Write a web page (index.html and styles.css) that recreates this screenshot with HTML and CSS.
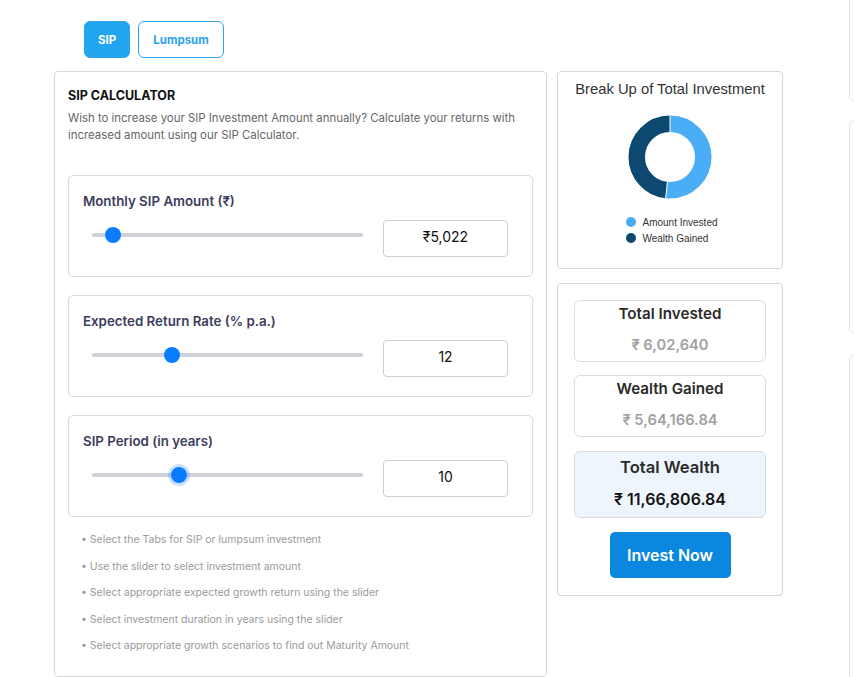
FILE: index.html
```html
<!DOCTYPE html>
<html>
<head>
	<title>SIP Calculator</title>
	<link rel="stylesheet" href="styles.css">
</head>
<body>
	<div class="page">
		<div class="calc">
			<div class="tabs">
				<button class="tab active">SIP</button>
				<button class="tab">Lumpsum</button>
			</div>

			<div class="calc-body">
				<div class="panel inputs">
					<h3>SIP CALCULATOR</h3>
					<p class="intro">Wish to increase your SIP Investment Amount annually? Calculate your returns with increased amount using our SIP Calculator.</p>

					<div class="field">
						<label>Monthly SIP Amount (₹)</label>
						<div class="field-row">
							<input type="range" min="500" max="90000" value="5022">
							<input type="text" class="field-value" value="₹5,022">
						</div>
					</div>

					<div class="field">
						<label>Expected Return Rate (% p.a.)</label>
						<div class="field-row">
							<input type="range" min="1" max="40" value="12">
							<input type="text" class="field-value" value="12">
						</div>
					</div>

					<div class="field">
						<label>SIP Period (in years)</label>
						<div class="field-row">
							<input type="range" class="focused" min="1" max="30" value="10">
							<input type="text" class="field-value" value="10">
						</div>
					</div>

					<ul class="tips">
						<li>Select the Tabs for SIP or lumpsum investment</li>
						<li>Use the slider to select investment amount</li>
						<li>Select appropriate expected growth return using the slider</li>
						<li>Select investment duration in years using the slider</li>
						<li>Select appropriate growth scenarios to find out Maturity Amount</li>
					</ul>
				</div>

				<div class="side">
					<div class="panel chart">
						<h4>Break Up of Total Investment</h4>
						<svg class="donut" width="84" height="84" viewBox="0 0 84 84">
							<g transform="rotate(-90 42 42)">
								<circle cx="42" cy="42" r="33.25" fill="none" stroke="#4aaef6" stroke-width="16.5" stroke-dasharray="107.9 300"></circle>
								<circle cx="42" cy="42" r="33.25" fill="none" stroke="#0c486f" stroke-width="16.5" stroke-dasharray="101 300" stroke-dashoffset="-107.9"></circle>
							</g>
							<line x1="42" y1="0.5" x2="42" y2="17" stroke="#fff" stroke-width="1"></line>
							<line x1="39.4" y1="66.9" x2="37.7" y2="83.3" stroke="#fff" stroke-width="1"></line>
						</svg>
						<div class="legend">
							<div><span class="dot invested"></span>Amount Invested</div>
							<div><span class="dot gained"></span>Wealth Gained</div>
						</div>
					</div>

					<div class="panel results">
						<div class="stat">
							<div class="stat-title">Total Invested</div>
							<div class="stat-value">₹ 6,02,640</div>
						</div>
						<div class="stat">
							<div class="stat-title">Wealth Gained</div>
							<div class="stat-value">₹ 5,64,166.84</div>
						</div>
						<div class="stat total">
							<div class="stat-title">Total Wealth</div>
							<div class="stat-value">₹ 11,66,806.84</div>
						</div>
						<button class="invest">Invest Now</button>
					</div>
				</div>
			</div>
		</div>

		<div class="aside">
			<div class="aside-card first"></div>
			<div class="aside-card second"></div>
			<div class="aside-card third"></div>
		</div>
	</div>
</body>
</html>
```

FILE: styles.css
```css
html, body {
	margin: 0;
	overflow: hidden;
	background: #fff;
}

body, input, button {
	font-family: Inter, "Noto Sans", sans-serif;
}

.page {
	display: flex;
	padding-left: 54px;
	gap: 66px;
}

.calc {
	width: 729px;
	flex-shrink: 0;
}

/* tabs */

.tabs {
	display: flex;
	gap: 8px;
	margin: 21px 0 13px 30px;
}

.tab {
	height: 37px;
	padding: 0;
	border: 1px solid #2ea4ef;
	border-radius: 6px;
	background: #fff;
	color: #2ea4ef;
	font-size: 11.5px;
	font-weight: bold;
}

.tab.active {
	background: #22a5ef;
	color: #fff;
	width: 46px;
}

.tab:not(.active) {
	width: 86px;
}

/* panels */

.calc-body {
	display: flex;
	align-items: flex-start;
	gap: 10px;
}

.panel {
	border: 1px solid #d7d7d7;
	border-radius: 4px;
	background: #fff;
	box-sizing: border-box;
}

.inputs {
	width: 493px;
	padding: 15px 13px 16px 13px;
}

.inputs h3 {
	margin: 0;
	font-size: 12.5px;
	line-height: 18px;
	color: #111;
}

.intro {
	margin: 5px 0 31px 0;
	font-size: 11.4px;
	line-height: 17px;
	color: #666;
}

.field {
	border: 1px solid #d9d9d9;
	border-radius: 5px;
	padding: 16px 24px 19px 14px;
	margin-bottom: 18px;
}

.field:last-of-type {
	margin-bottom: 10px;
}

.field label {
	display: block;
	font-size: 13.3px;
	font-weight: 600;
	line-height: 18px;
	color: #3c3d5c;
}

.field-row {
	display: flex;
	align-items: flex-start;
	margin: 10px 0 0 9px;
}

.field-row input[type=range] {
	-webkit-appearance: none;
	appearance: none;
	width: 271px;
	height: 16px;
	margin: 7px 20px 0 0;
	padding: 0;
	background: transparent;
}

.field-row input[type=range]::-webkit-slider-runnable-track {
	height: 4px;
	border-radius: 2px;
	background: #cfd3d9;
}

.field-row input[type=range]::-webkit-slider-thumb {
	-webkit-appearance: none;
	width: 16px;
	height: 16px;
	margin-top: -6px;
	border-radius: 50%;
	background: #0a7cff;
	border: none;
}

.field-row .focused::-webkit-slider-thumb {
	box-shadow: 0 0 0 3px rgba(10, 124, 255, 0.22);
}

.field-value {
	box-sizing: border-box;
	width: 125px;
	height: 37px;
	padding: 0 0 4px 0;
	border: 1px solid #cfcfcf;
	border-radius: 4px;
	text-align: center;
	font-size: 14px;
	color: #111;
}

.tips {
	list-style: none;
	margin: 0;
	padding: 0 0 0 13px;
}

.tips li {
	font-size: 10.5px;
	line-height: 26.5px;
	color: #9a9a9a;
}

.tips li:before {
	content: "• ";
}

/* right column */

.side {
	width: 226px;
	display: flex;
	flex-direction: column;
	gap: 14px;
}

.chart {
	height: 198px;
	text-align: center;
	font-family: "Liberation Sans", Arial, sans-serif;
}

.chart h4 {
	margin: 8px 0 0 0;
	font-size: 14.8px;
	font-weight: normal;
	line-height: 18px;
	color: #333;
}

.donut {
	display: block;
	margin: 17px auto 0 auto;
}

.legend {
	display: inline-block;
	text-align: left;
	margin: 16px 0 0 4px;
	font-size: 10px;
	line-height: 16px;
	color: #333;
}

.dot {
	display: inline-block;
	width: 10px;
	height: 10px;
	border-radius: 50%;
	margin-right: 6px;
	vertical-align: -1px;
}

.dot.invested {
	background: #4aaef6;
}

.dot.gained {
	background: #0c486f;
}

.results {
	padding: 16px 16px 17px 16px;
	display: flex;
	flex-direction: column;
	align-items: center;
	gap: 13px;
}

.stat {
	box-sizing: border-box;
	width: 100%;
	height: 62px;
	border: 1px solid #dcdcdc;
	border-radius: 6px;
	text-align: center;
	padding-top: 3px;
}

.stat-title {
	font-size: 15.2px;
	font-weight: 600;
	line-height: 20px;
	color: #2b2b2b;
}

.stat-value {
	margin-top: 11px;
	font-size: 14.7px;
	font-weight: 600;
	line-height: 20px;
	color: #a0a0a0;
}

.stat.total {
	height: 67px;
	margin-top: 1px;
	background: #eef5fc;
	border-color: #d8dde3;
}

.stat.total .stat-title {
	font-size: 16.6px;
	line-height: 24px;
}

.stat.total .stat-value {
	margin-top: 10px;
	font-size: 16px;
	color: #111;
}

.invest {
	width: 121px;
	height: 46px;
	margin-top: 1px;
	border: none;
	border-radius: 5px;
	background: #0b87e0;
	color: #fff;
	font-size: 16px;
	font-weight: 600;
}

/* neighbouring column, cut off by the window */

.aside {
	width: 200px;
	flex-shrink: 0;
	margin-top: -20px;
	display: flex;
	flex-direction: column;
	gap: 18px;
}

.aside-card {
	border: 1px solid #e4e4e4;
	border-radius: 6px;
	background: #fdfdfd;
}

.aside-card.first {
	height: 120px;
}

.aside-card.second {
	height: 212px;
}

.aside-card.third {
	height: 400px;
	margin-top: 2px;
}
```
